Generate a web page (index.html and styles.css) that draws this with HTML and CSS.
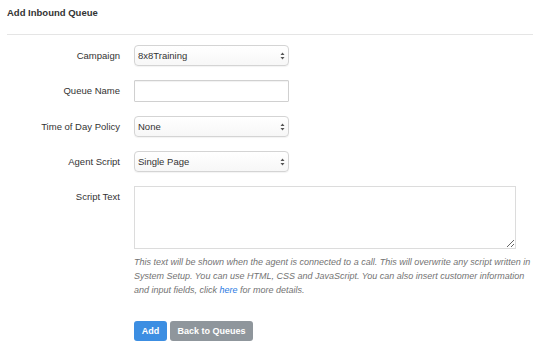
FILE: index.html
```html
<!DOCTYPE html>
<html lang="en">
<head>
    <meta charset="UTF-8">
    <title>Add Inbound Queue</title>
    <link rel="stylesheet" href="styles.css">
</head>
<body>
    <div class="page-title">Add Inbound Queue</div>

    <form class="queue-form">
        <div class="form-row">
            <label class="form-label">Campaign</label>
            <div class="select-wrap">
                <select class="form-control">
                    <option>8x8Training</option>
                </select>
                <svg class="caret" width="5" height="8" viewBox="0 0 5 8"><path d="M0.5 3L2.5 0.5L4.5 3ZM0.5 5L2.5 7.5L4.5 5Z" fill="#555"/></svg>
            </div>
        </div>

        <div class="form-row">
            <label class="form-label">Queue Name</label>
            <input type="text" class="form-control text-input">
        </div>

        <div class="form-row">
            <label class="form-label">Time of Day Policy</label>
            <div class="select-wrap">
                <select class="form-control">
                    <option>None</option>
                </select>
                <svg class="caret" width="5" height="8" viewBox="0 0 5 8"><path d="M0.5 3L2.5 0.5L4.5 3ZM0.5 5L2.5 7.5L4.5 5Z" fill="#555"/></svg>
            </div>
        </div>

        <div class="form-row">
            <label class="form-label">Agent Script</label>
            <div class="select-wrap">
                <select class="form-control">
                    <option>Single Page</option>
                </select>
                <svg class="caret" width="5" height="8" viewBox="0 0 5 8"><path d="M0.5 3L2.5 0.5L4.5 3ZM0.5 5L2.5 7.5L4.5 5Z" fill="#555"/></svg>
            </div>
        </div>

        <div class="form-row">
            <label class="form-label">Script Text</label>
            <div class="field">
                <textarea class="script-text"></textarea>
                <p class="help-text">This text will be shown when the agent is connected to a call. This will overwrite any script written in System Setup. You can use HTML, CSS and JavaScript. You can also insert customer information and input fields, click <a href="#">here</a> for more details.</p>
            </div>
        </div>

        <div class="form-actions">
            <button type="button" class="btn btn-primary">Add</button>
            <button type="button" class="btn btn-default">Back to Queues</button>
        </div>
    </form>
</body>
</html>
```

FILE: styles.css
```css
body {
    margin: 0;
    padding: 0 7px;
    font-family: 'Liberation Sans', Arial, sans-serif;
    font-size: 10px;
    color: #333;
    background-color: #fff;
}

/* Header */
.page-title {
    font-weight: bold;
    font-size: 9.5px;
    padding-top: 7px;
    padding-bottom: 16px;
    border-bottom: 1px solid #e5e5e5;
    margin-bottom: 10px;
}

/* Form rows */
.form-row {
    display: grid;
    grid-template-columns: 113px 382px;
    column-gap: 14px;
    align-items: start;
    margin-bottom: 14px;
}

.form-label {
    text-align: right;
    font-size: 9.5px;
    line-height: 21px;
}

.form-control {
    display: block;
    width: 155px;
    height: 21px;
    box-sizing: border-box;
    font-family: inherit;
    font-size: 9.5px;
    color: #333;
}

.select-wrap {
    position: relative;
    width: 155px;
}

.select-wrap select {
    -webkit-appearance: none;
    appearance: none;
    padding: 0 3px;
    border: 1px solid #d4d4d4;
    border-radius: 4px;
    background: linear-gradient(#ffffff, #f7f7f7);
    box-shadow: 0 1px 1px rgba(0, 0, 0, 0.05);
}

.select-wrap .caret {
    position: absolute;
    right: 4px;
    top: 7px;
}

.text-input {
    height: 22px;
    border: 1px solid #d0d0d0;
    border-radius: 1px;
    box-shadow: inset 0 1px 1px rgba(0, 0, 0, 0.06);
}

.script-text {
    display: block;
    width: 382px;
    height: 63px;
    box-sizing: border-box;
    border: 1px solid #dcdcdc;
    resize: vertical;
    margin: 0;
}

.help-text {
    margin: 6px 0 0;
    font-size: 9px;
    line-height: 14px;
    font-style: italic;
    color: #737373;
    width: 400px;
}

.help-text a {
    color: #2a7ae2;
    text-decoration: none;
}

/* Buttons */
.form-actions {
    padding-left: 127px;
    padding-top: 10px;
    display: flex;
    gap: 3px;
}

.btn {
    height: 20px;
    border: none;
    border-radius: 3px;
    color: white;
    font-family: inherit;
    font-weight: bold;
    font-size: 9px;
    padding: 0 6px;
    cursor: pointer;
}

.btn-primary {
    background-color: #3c8ee2;
    width: 33px;
}

.btn-default {
    background-color: #8f969c;
    width: 83px;
}
```
